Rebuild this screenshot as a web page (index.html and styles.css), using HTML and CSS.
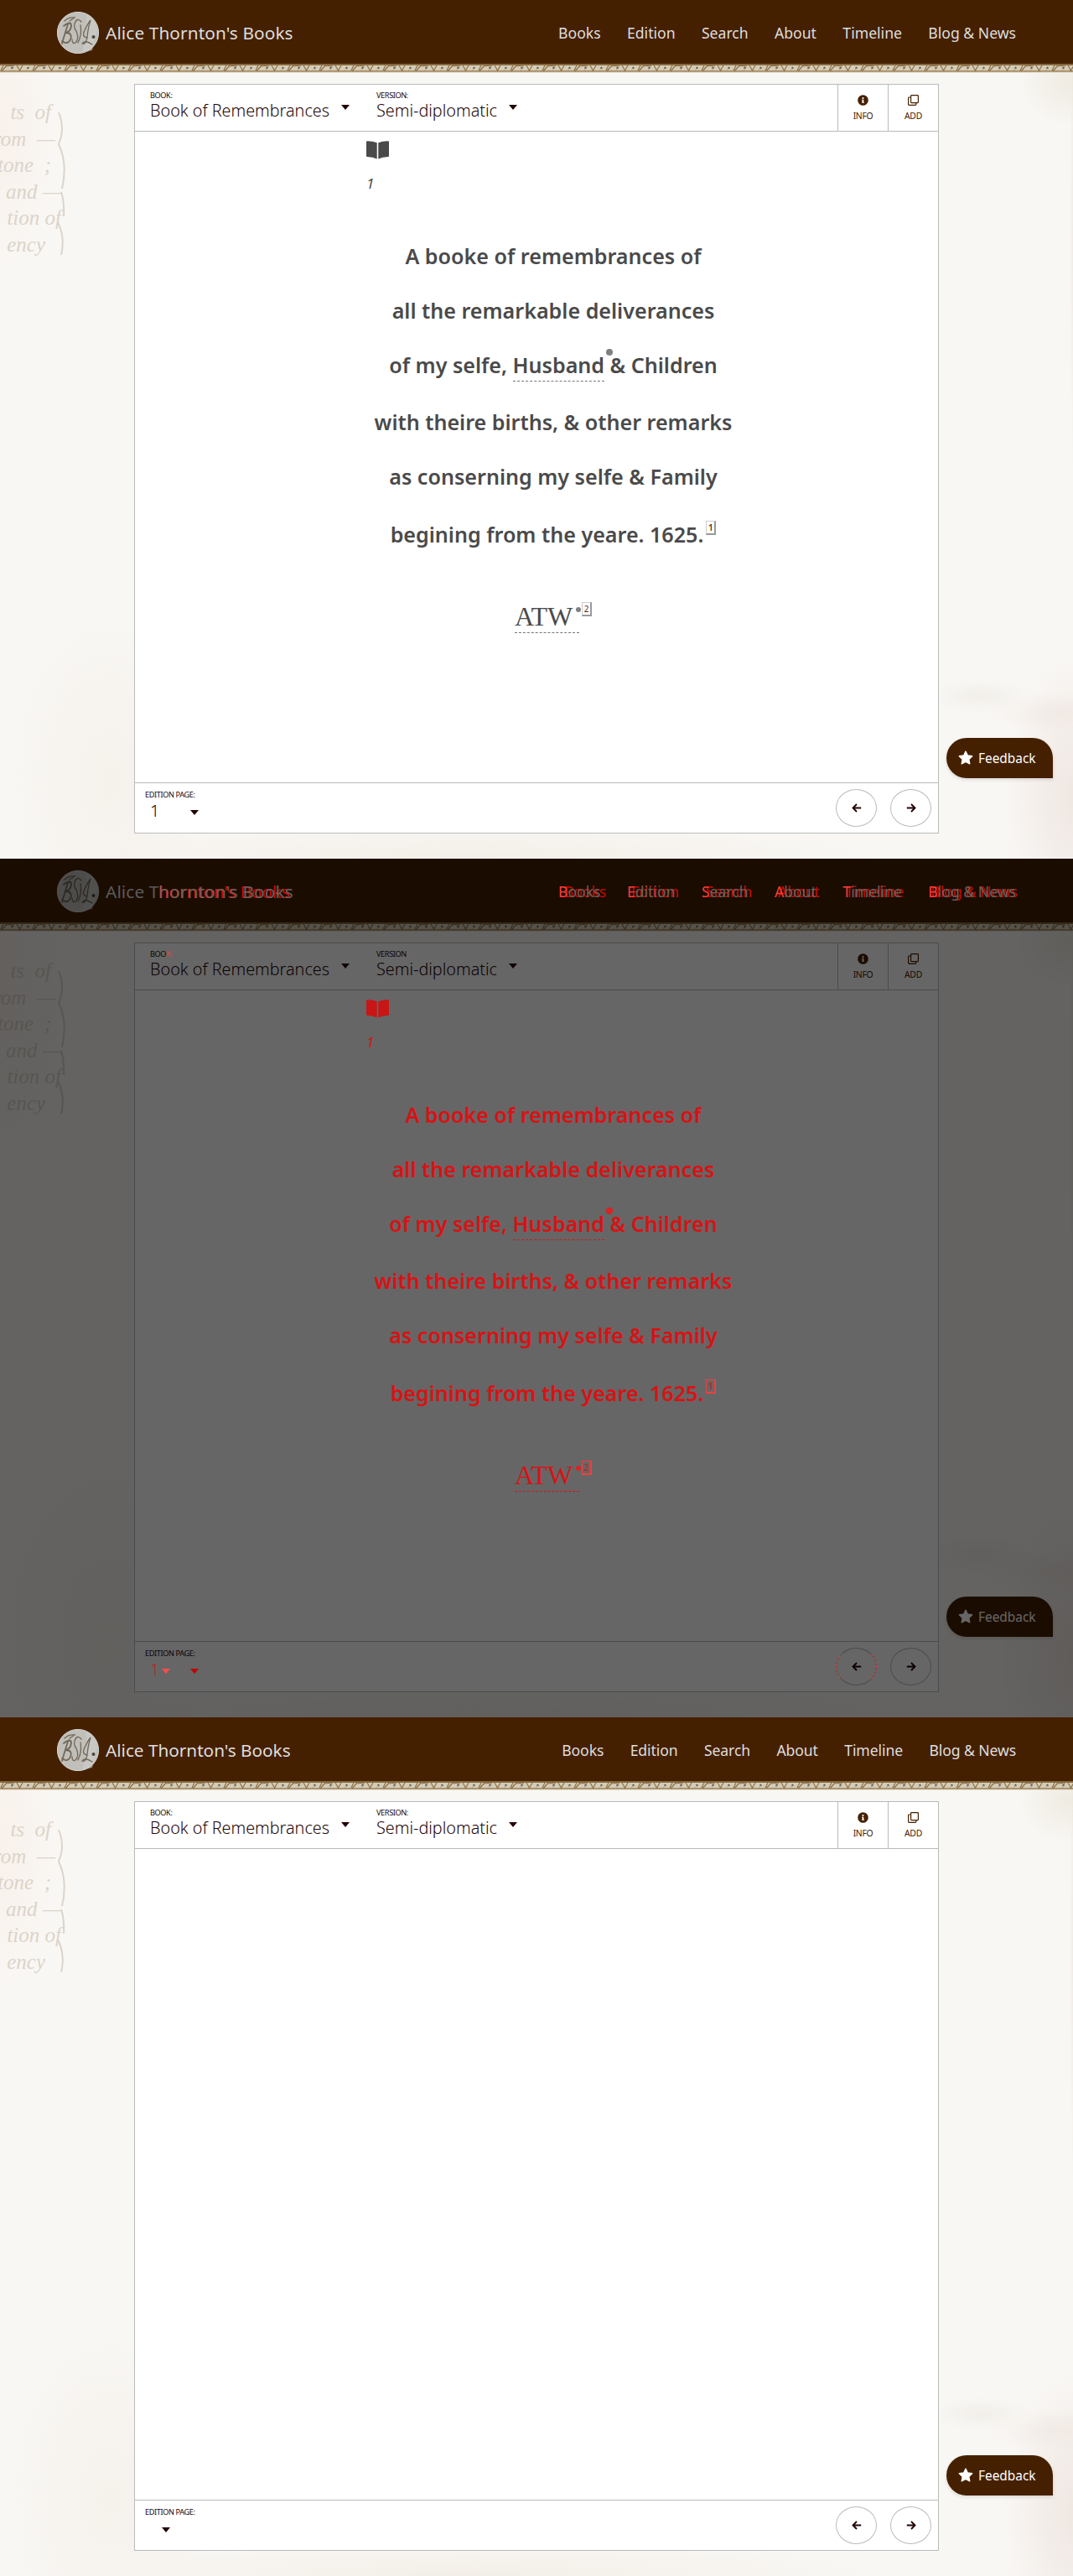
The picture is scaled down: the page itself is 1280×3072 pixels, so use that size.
FILE: index.html
```html
<!DOCTYPE html>
<html lang="en">
<head>
<meta charset="utf-8">
<title>Alice Thornton's Books</title>
<link rel="stylesheet" href="styles.css">
</head>
<body>
<svg class="defs" width="0" height="0">
  <defs>
    <pattern id="braid" width="38" height="11" patternUnits="userSpaceOnUse">
      <rect width="38" height="11" fill="#d3ccb9"/>
      <path d="M0 1H38" stroke="#86673c" stroke-width="2"/>
      <path d="M0 8.8H38" stroke="#9a7545" stroke-width="1.3"/>
      <path d="M2 9L8 2M20 2L24 9M23 9L27 2M4 2L1 8M7 3Q12 2 17 3" stroke="#8d7046" stroke-width="1.2" fill="none"/>
      <circle cx="14.5" cy="5" r="1.2" fill="#5d4a34"/>
      <circle cx="33.5" cy="5" r="1.2" fill="#5d4a34"/>
      <path d="M13 8L15 5M31 8L35 4" stroke="#a99c80" stroke-width=".7"/>
      <path d="M0 10.5H38" stroke="#e4dfd2" stroke-width="1"/>
    </pattern>
    <symbol id="seal" viewBox="0 0 50 50">
      <circle cx="25" cy="25" r="24.6" fill="#c1bfb9" stroke="#d8d8d6"/>
      <path d="M35 3Q47 10 48 22L42 46 30 49 36 24Z" fill="#cfcecb" opacity=".6"/>
      <g fill="none" stroke="#72685a" stroke-width="1.3" stroke-linecap="round">
        <path d="M9 11Q14 6 21 7L15 11"/>
        <path d="M13 15Q9 27 6 38M8 17Q17 10 17 17 16 24 10 25 19 25 16 33 13 40 6 35" stroke-width="1.8"/>
        <path d="M29 12Q24 6 21 14 20 20 23 23 27 32 22 37 18 39 18 33"/>
        <path d="M36 31Q29 30 33 22 38 12 40 10 37 19 36 31 34 40 30 38 33 33 42 39"/>
        <path d="M28 16Q30 27 25 37"/>
      </g>
      <circle cx="43.500" cy="30" r="2" fill="#4b453b"/>
    </symbol>
    <symbol id="book" viewBox="0 0 27 22">
      <path d="M0 1Q0 .3 1 .3 8 .2 12.700 2.200V21.500Q8 19.300 1 19.100 0 19 0 18ZM27 1Q27 .3 26 .3 19 .2 14.300 2.200V21.500Q19 19.300 26 19.100 27 19 27 18Z"/>
    </symbol>
    <symbol id="info" viewBox="0 0 512 512">
      <path d="M256 8a248 248 0 1 0 0 496a248 248 0 0 0 0-496zm0 110a42 42 0 1 1 0 84a42 42 0 0 1 0-84zm56 254a12 12 0 0 1-12 12h-88a12 12 0 0 1-12-12v-24a12 12 0 0 1 12-12h12v-64h-12a12 12 0 0 1-12-12v-24a12 12 0 0 1 12-12h64a12 12 0 0 1 12 12v100h12a12 12 0 0 1 12 12z"/>
    </symbol>
    <symbol id="clone" viewBox="0 0 13 13">
      <g fill="none" stroke="currentColor" stroke-width="1.200"><rect x="3.600" y=".6" width="8.800" height="9" rx=".8"/><path d="M3.600 3H1.400Q.6 3 .6 3.800V11.600Q.6 12.400 1.400 12.400H9Q9.800 12.400 9.800 11.600V9.600"/></g>
    </symbol>
    <symbol id="left" viewBox="0 0 12 11">
      <path d="M11.200 5.500H1.800M6 1L1.500 5.500 6 10" fill="none" stroke="currentColor" stroke-width="1.900"/>
    </symbol>
    <symbol id="right" viewBox="0 0 12 11">
      <path d="M.8 5.500H10.200M6 1L10.500 5.500 6 10" fill="none" stroke="currentColor" stroke-width="1.900"/>
    </symbol>
    <symbol id="star" viewBox="0 0 24 24">
      <path d="M12 1.500l3.100 6.500 7.200 1-5.200 5 1.300 7.200L12 17.800 5.600 21.200 6.900 14 1.700 9l7.200-1z" fill="#fff" stroke="#fff" stroke-width="1.800" stroke-linejoin="round"/>
    </symbol>
  </defs>
</svg>

<section class="page">
  <header class="bar">
    <a class="brand"><svg class="seal"><use href="#seal"/></svg><span class="name">Alice Thornton's Books</span></a>
    <nav class="nav"><a>Books</a><a>Edition</a><a>Search</a><a>About</a><a>Timeline</a><a>Blog &amp; News</a></nav>
  </header>
  <svg class="braid"><rect width="100%" height="11" fill="url(#braid)"/></svg>
  <aside class="script"><p class="s1">ts &nbsp;of</p><p class="s2">rom &nbsp;—</p><p class="s1">tone &nbsp;;</p><p class="s3">and —</p><p class="s3">tion of</p><p class="s4">ency</p><svg class="brace" viewBox="0 0 12 175"><path d="M2 1Q8 16 5 30L2 39Q13 62 6 92M5 96Q9 108 8 125M1 132Q10 150 5 171"/></svg></aside>
  <main class="panel">
    <div class="tools">
      <div class="field book"><span class="label">Book:</span><div class="value"><span>Book of Remembrances</span><i class="caret"></i></div></div>
      <div class="field version"><span class="label">Version:</span><div class="value"><span>Semi-diplomatic</span><i class="caret"></i></div></div>
      <a class="tool"><svg><use href="#info"/></svg><span>INFO</span></a>
      <a class="tool"><svg><use href="#clone"/></svg><span>ADD</span></a>
    </div>
    <div class="text">
      <div class="body">
        <svg class="bookicon"><use href="#book"/></svg>
        <p class="folio">1</p>
        <div class="lines">
          <p class="l1">A booke of remembrances of</p>
          <p class="l2">all the remarkable deliverances</p>
          <p class="l3">of my selfe, <span class="person">Husband<i class="dot"></i></span> &amp; Children</p>
          <p class="l4">with theire births, &amp; other remarks</p>
          <p class="l5">as conserning my selfe &amp; Family</p>
          <p class="l6">begining from the yeare. 1625.<sup class="note">1</sup></p>
          <p class="sign"><span class="person">ATW<i class="dot"></i></span><sup class="note">2</sup></p>
        </div>
      </div>
    </div>
    <footer class="foot">
      <div class="pager"><span class="label">Edition page:</span><div class="value"><span class="num">1</span><i class="caret"></i></div></div>
      <a class="round"><svg><use href="#left"/></svg></a>
      <a class="round"><svg><use href="#right"/></svg></a>
    </footer>
  </main>
  <a class="feedback"><svg><use href="#star"/></svg><span>Feedback</span></a>
</section>

<section class="page diff">
  <header class="bar">
    <a class="brand"><svg class="seal"><use href="#seal"/></svg><span class="name">Alice T<span class="changed" data-old="hornton's Books">hornton's Books</span></span></a>
    <nav class="nav"><a data-old="Books">Books</a><a data-old="Edition">Edition</a><a data-old="Search">Search</a><a data-old="About">About</a><a data-old="Timeline">Timeline</a><a data-old="Blog &amp; News">Blog &amp; News</a></nav>
  </header>
  <svg class="braid"><rect width="100%" height="11" fill="url(#braid)"/></svg>
  <aside class="script"><p class="s1">ts &nbsp;of</p><p class="s2">rom &nbsp;—</p><p class="s1">tone &nbsp;;</p><p class="s3">and —</p><p class="s3">tion of</p><p class="s4">ency</p><svg class="brace" viewBox="0 0 12 175"><path d="M2 1Q8 16 5 30L2 39Q13 62 6 92M5 96Q9 108 8 125M1 132Q10 150 5 171"/></svg></aside>
  <main class="panel">
    <div class="tools">
      <div class="field book"><span class="label">Boo<b class="hot">k:</b></span><div class="value"><span>Book of Remembrances</span><i class="caret"></i></div></div>
      <div class="field version"><span class="label">Version<b class="hot">:</b></span><div class="value"><span>Semi-diplomatic</span><i class="caret"></i></div></div>
      <a class="tool"><svg><use href="#info"/></svg><span>INFO</span></a>
      <a class="tool"><svg><use href="#clone"/></svg><span>ADD</span></a>
    </div>
    <div class="text">
      <div class="body">
        <svg class="bookicon"><use href="#book"/></svg>
        <p class="folio">1</p>
        <div class="lines">
          <p class="l1">A booke of remembrances of</p>
          <p class="l2">all the remarkable deliverances</p>
          <p class="l3">of my selfe, <span class="person">Husband<i class="dot"></i></span> &amp; Children</p>
          <p class="l4">with theire births, &amp; other remarks</p>
          <p class="l5">as conserning my selfe &amp; Family</p>
          <p class="l6">begining from the yeare. 1625.<sup class="note">1</sup></p>
          <p class="sign"><span class="person">ATW<i class="dot"></i></span><sup class="note">2</sup></p>
        </div>
      </div>
    </div>
    <footer class="foot">
      <div class="pager"><span class="label">Edition page:</span><div class="value"><span class="num">1</span><i class="caret extra"></i><i class="caret"></i></div></div>
      <a class="round changed-ring"><svg><use href="#left"/></svg></a>
      <a class="round"><svg><use href="#right"/></svg></a>
    </footer>
  </main>
  <a class="feedback"><svg><use href="#star"/></svg><span>Feedback</span></a>
</section>

<section class="page loading">
  <header class="bar">
    <a class="brand"><svg class="seal"><use href="#seal"/></svg><span class="name">Alice Thornton's Books</span></a>
    <nav class="nav"><a>Books</a><a>Edition</a><a>Search</a><a>About</a><a>Timeline</a><a>Blog &amp; News</a></nav>
  </header>
  <svg class="braid"><rect width="100%" height="11" fill="url(#braid)"/></svg>
  <aside class="script"><p class="s1">ts &nbsp;of</p><p class="s2">rom &nbsp;—</p><p class="s1">tone &nbsp;;</p><p class="s3">and —</p><p class="s3">tion of</p><p class="s4">ency</p><svg class="brace" viewBox="0 0 12 175"><path d="M2 1Q8 16 5 30L2 39Q13 62 6 92M5 96Q9 108 8 125M1 132Q10 150 5 171"/></svg></aside>
  <main class="panel">
    <div class="tools">
      <div class="field book"><span class="label">Book:</span><div class="value"><span>Book of Remembrances</span><i class="caret"></i></div></div>
      <div class="field version"><span class="label">Version:</span><div class="value"><span>Semi-diplomatic</span><i class="caret"></i></div></div>
      <a class="tool"><svg><use href="#info"/></svg><span>INFO</span></a>
      <a class="tool"><svg><use href="#clone"/></svg><span>ADD</span></a>
    </div>
    <div class="text"></div>
    <footer class="foot">
      <div class="pager"><span class="label">Edition page:</span><div class="value"><i class="caret"></i></div></div>
      <a class="round"><svg><use href="#left"/></svg></a>
      <a class="round"><svg><use href="#right"/></svg></a>
    </footer>
  </main>
  <a class="feedback"><svg><use href="#star"/></svg><span>Feedback</span></a>
</section>
</body>
</html>
```

FILE: styles.css
```css
* { box-sizing: border-box; }
body { margin: 0; font-family: "Noto Sans", sans-serif; color: #4a4a4a; }
p { margin: 0; }
svg { display: block; }
.defs { position: absolute; }

.page {
  position: relative;
  height: 1024px;
  overflow: hidden;
  display: flex;
  flex-direction: column;
  background:
    radial-gradient(ellipse 60px 50px at 1275px 100px, rgba(226, 220, 204, .45), transparent),
    radial-gradient(ellipse 8px 330px at 1284px 290px, rgba(226, 220, 204, .8), transparent),
    radial-gradient(ellipse 90px 170px at 1285px 950px, rgba(232, 218, 212, .6), transparent),
    radial-gradient(ellipse 90px 25px at 1265px 850px, rgba(236, 226, 220, .45), transparent),
    radial-gradient(ellipse 60px 20px at 1170px 830px, rgba(230, 226, 218, .4), transparent),
    radial-gradient(ellipse 70px 180px at 0 150px, rgba(248, 234, 226, .5), transparent),
    radial-gradient(ellipse 120px 200px at 130px 930px, rgba(242, 237, 229, .6), transparent),
    radial-gradient(ellipse 500px 45px at 560px 1024px, rgba(240, 235, 226, .7), transparent),
    #f9f7f4;
}
.bar {
  height: 76px;
  flex: none;
  background: #452000;
  display: flex;
  justify-content: space-between;
  align-items: center;
  padding: 2px 68px 0 68px;
  color: #dedede;
}
.brand { display: flex; align-items: center; gap: 8px; }
.seal { width: 50px; height: 50px; }
.name { font-size: 20.800px; line-height: 30px; letter-spacing: .1px; }
.nav { display: flex; gap: 31.400px; font-size: 17.600px; letter-spacing: 0; line-height: 26px; }
.loading .name { letter-spacing: -.04px; }
.loading .nav { letter-spacing: -.1px; }
.braid { width: 100%; height: 11px; flex: none; }

/* handwriting at the left margin */
.script {
  position: absolute;
  left: 0;
  top: 118px;
  width: 82px;
  overflow: hidden;
  font: italic 25px/31.500px "Liberation Serif", serif;
  color: #dcd4ca;
}
.script p { display: flex; justify-content: flex-end; white-space: nowrap; }
.s1 { padding-right: 21px; }
.s2 { padding-right: 16px; }
.s3 { padding-right: 9px; }
.s4 { padding-right: 28px; }
.brace { position: absolute; left: 68px; top: 15px; width: 12px; height: 175px; fill: none; stroke: #dcd4ca; stroke-width: 2; }

.panel {
  width: 960px;
  height: 894px;
  margin: 13px auto 0;
  background: #fff;
  border: 1px solid #b9bbbb;
  display: flex;
  flex-direction: column;
}
.tools { height: 56px; flex: none; display: flex; border-bottom: 1px solid #b9bbbb; color: #240505; }
.label { display: block; font-size: 9.200px; line-height: 12px; text-transform: uppercase; letter-spacing: -.4px; }
.field { padding: 7px 0 0 18px; }
.field.book { width: 269px; }
.field.version { flex: 1; padding-left: 19px; }
.value { display: flex; }
.field .value { font: 300 19.800px/24px "Noto Sans", sans-serif; letter-spacing: 0; gap: 14px; }
.caret { width: 10px; height: 6px; margin-top: 5px; background: #240505; clip-path: polygon(0 0, 100% 0, 50% 100%); }
.tool {
  width: 60px;
  border-left: 1px solid #b9bbbb;
  display: flex;
  flex-direction: column;
  align-items: center;
  padding-top: 12px;
  color: #452000;
  font-size: 10.400px;
  line-height: 14px;
  letter-spacing: -.3px;
}
.tool svg { width: 13px; height: 13px; margin-bottom: 5px; fill: currentColor; }

.text { flex: 1; }
.body { width: 520px; margin-left: 276px; padding-top: 11px; }
.bookicon { width: 27px; height: 22px; fill: #4a4a4a; }
.folio { font: italic 17px/24px "Noto Sans", sans-serif; margin-top: 17px; height: 24px; }
.lines { width: 446px; text-align: center; font-weight: 600; font-size: 25.100px; white-space: nowrap; }
.lines p { line-height: 32px; height: 32px; margin-top: 33px; }
.lines .l1 { margin-top: 58px; }
.lines .l4 { margin-top: 36px; }
.lines .l6 { margin-top: 37px; }
.lines .sign { margin-top: 66px; font: 400 32px/32px "Liberation Serif", serif; }
.person { position: relative; display: inline-block; height: 36px; border-bottom: 1px dashed #777; }
.dot { position: absolute; right: -10px; top: -3px; width: 8px; height: 8px; border-radius: 50%; background: #808080; }
.sign .person { width: 77px; text-align: left; }
.sign .dot { width: 6px; height: 6px; right: -2px; top: 5px; }
.note {
  display: inline-block;
  width: 12px;
  height: 17px;
  margin: -16px 0 0 3px;
  border: 1px solid #ccc;
  border-right: 2px solid #999;
  border-bottom: 2px solid #999;
  font: 600 10px/14px "Noto Sans", sans-serif;
  color: #5a2a08;
  text-align: center;
  vertical-align: 14px;
}
.sign .note { font-weight: 400; vertical-align: 16px; }

.foot { height: 60px; flex: none; display: flex; align-items: flex-start; border-top: 1px solid #b9bbbb; padding: 7px 8px 0 12px; gap: 16px; color: #240505; }
.pager { flex: 1; padding-top: 1px; }
.pager .value { font: 300 20px/24px "Noto Sans", sans-serif; padding: 1px 0 0 6px; }
.num { width: 48px; }
.pager .caret { margin-top: 11px; }
.loading .pager .value { padding-left: 20px; }
.round { width: 49px; height: 45px; border: 1px solid #b9bbbb; border-radius: 50%; display: flex; align-items: center; justify-content: center; }
.round svg { width: 12px; height: 11px; }

.feedback {
  position: absolute;
  left: 1129px;
  top: 880px;
  width: 127px;
  height: 48px;
  border-radius: 24px 24px 0 24px;
  background: #452000;
  color: #fff;
  box-shadow: 0 2px 4px rgba(0, 0, 0, .12);
  display: flex;
  align-items: center;
  gap: 6px;
  padding-left: 14px;
  font-size: 15.400px;
}
.feedback svg { width: 18px; height: 18px; }

/* comparison view: dimmed page, changed content in red */
.diff::after { content: ""; position: absolute; inset: 0; background: rgba(0, 0, 0, .6); z-index: 1; }
.diff .bookicon, .diff .lines, .diff .folio, .diff .num, .diff .hot, .diff .pager .caret { position: relative; z-index: 2; color: #d81214; }
.diff .bookicon { fill: #c81616; }
.diff .person { border-color: #d01618; }
.diff .dot { background: #dc2222; }
.diff .note { border-color: #f04040; color: #d01618; }
.diff .hot { font-weight: 400; color: #f23a3a; }
.diff .pager .caret { background: #c00000; }
.diff .pager .value { position: relative; }
.diff .pager .caret.extra { position: absolute; left: 20px; top: 1px; background: #ff4c4c; }
.changed-ring { position: relative; }
.changed-ring::before {
  content: "";
  position: absolute;
  inset: -1px;
  z-index: 2;
  border: 1px dashed #f04040;
  border-top-color: transparent;
  border-bottom-color: transparent;
  border-radius: 50%;
}
.diff .nav a, .diff .changed { position: relative; z-index: 3; color: #66625f; }
.diff .nav a::before, .diff .changed::before { content: attr(data-old); position: absolute; left: 3px; top: 0; z-index: -1; color: #cc0800; white-space: nowrap; }
.diff .nav a::before { line-height: 26px; letter-spacing: -.1px; }
.diff .nav a:nth-child(1)::before { left: 7px; }
.diff .nav a:nth-child(2)::before, .diff .nav a:nth-child(3)::before { left: 5px; }
.diff .nav a:nth-child(4)::before { left: 4px; }
.diff .changed::before { left: -1px; line-height: 30px; top: -1px; letter-spacing: -.1px; }
.diff .nav a::first-letter { color: #ff3c3c; }
```
